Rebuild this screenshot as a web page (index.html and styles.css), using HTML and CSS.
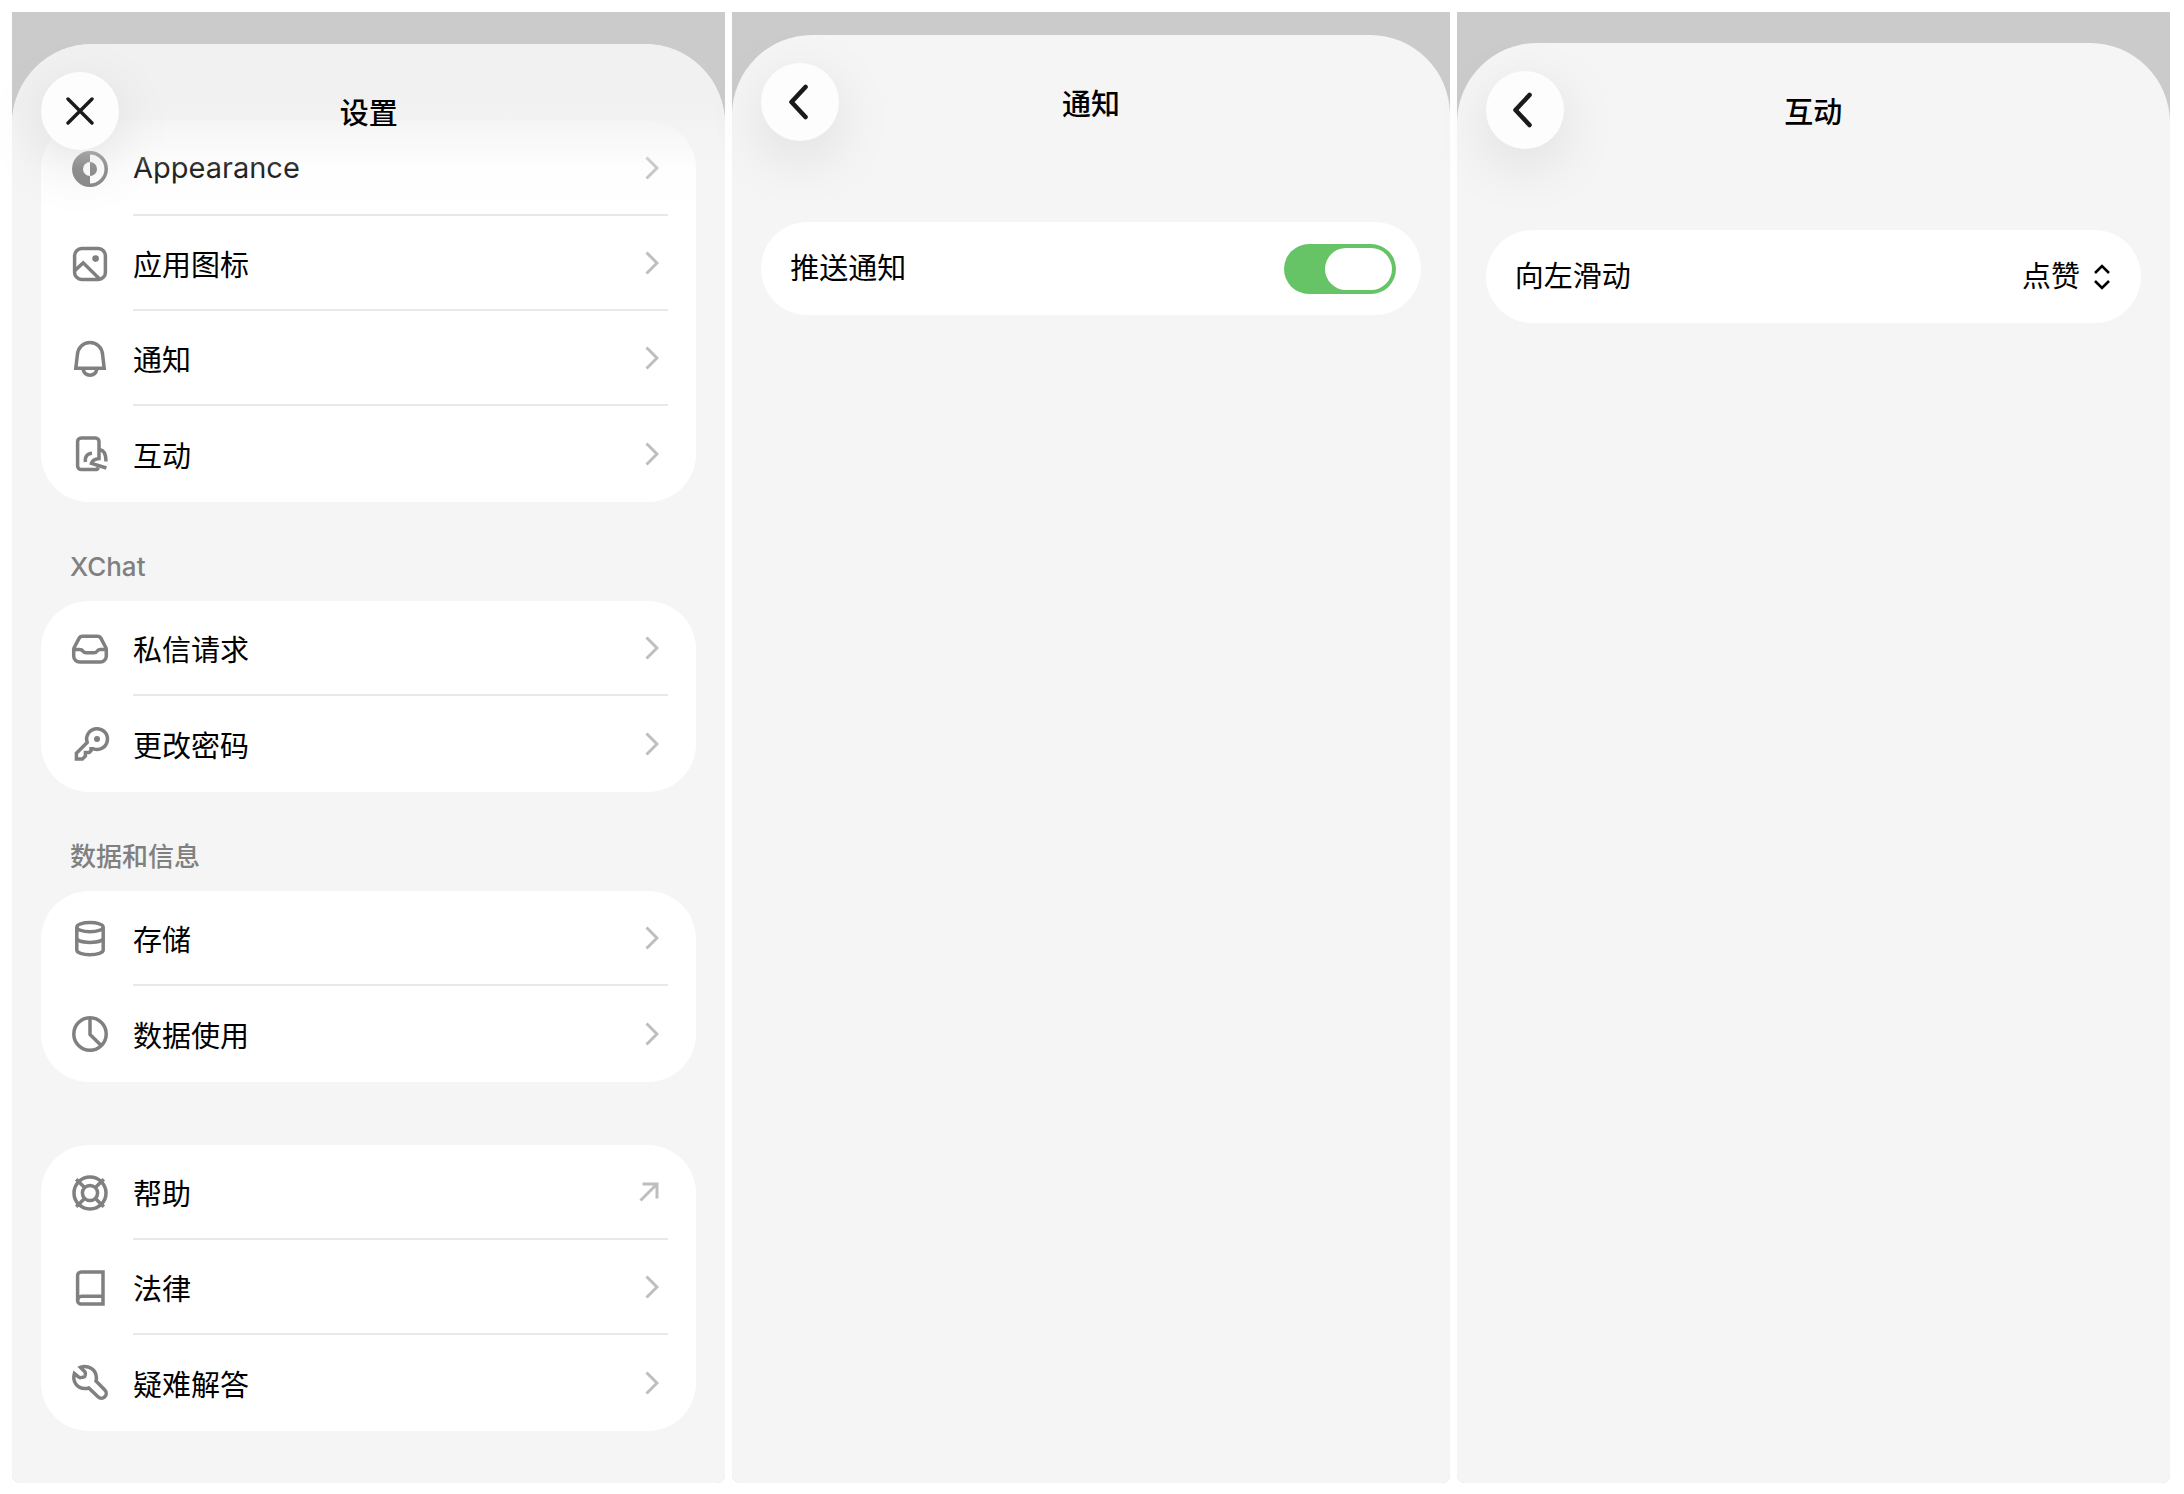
FILE: index.html
```html
<!DOCTYPE html>
<html lang="zh-CN">
<head>
  <meta charset="UTF-8" />
  <meta name="viewport" content="width=device-width, initial-scale=1.0"/>
  <title>设置</title>
  <link rel="stylesheet" href="styles.css">
</head>
<body>

<svg class="defs" aria-hidden="true">
  <symbol id="chevron" viewBox="0 0 14 24">
    <path d="M1.5 1.5 L12 12 L1.5 22.5"/>
  </symbol>
  <symbol id="back" viewBox="0 0 20 36">
    <path d="M17.5 3 L3.5 18 L17.5 33"/>
  </symbol>
</svg>

<main class="screens">

  <section class="screen">
    <div class="sheet sheet-settings">
      <header class="header">
        <button class="round-btn" aria-label="关闭">
          <svg class="close" viewBox="0 0 28 28"><path d="M2 2 L26 26 M26 2 L2 26"/></svg>
        </button>
        <h1>设置</h1>
      </header>

      <div class="content">
        <nav class="card">
          <a class="row" href="#">
            <svg class="icon" viewBox="0 0 40 40">
              <circle cx="20" cy="20" r="16.2"/>
              <path class="fill" d="M20 4 A16 16 0 0 0 20 36 V27 A7 7 0 0 1 20 13 Z"/>
              <path class="fill" d="M20 13 A7 7 0 0 1 20 27 Z"/>
            </svg>
            <span class="label">Appearance<svg class="chevron"><use href="#chevron"/></svg></span>
          </a>
          <a class="row" href="#">
            <svg class="icon" viewBox="0 0 40 40">
              <rect x="4.6" y="4.6" width="30.8" height="30.8" rx="7"/>
              <circle class="fill" cx="25.6" cy="14.6" r="3.3"/>
              <path d="M5 26.4 L13.2 18.8 L29.6 35"/>
            </svg>
            <span class="label">应用图标<svg class="chevron"><use href="#chevron"/></svg></span>
          </a>
          <a class="row" href="#">
            <svg class="icon" viewBox="0 0 40 40">
              <path d="M5.8 29.2 L7.4 15.6 C8 8.5 13 3.6 20 3.6 S32 8.5 32.6 15.6 L34.2 29.2 Z"/>
              <path d="M13 30 C14 34.2 17 36.2 20 36.2 S26 34.2 27 30"/>
            </svg>
            <span class="label">通知<svg class="chevron"><use href="#chevron"/></svg></span>
          </a>
          <a class="row" href="#">
            <svg class="icon" viewBox="0 0 40 40">
              <path d="M28.4 33.6 Q27.4 35.6 25.4 35.6 H11.2 A3.6 3.6 0 0 1 7.6 32 V7.6 A3.6 3.6 0 0 1 11.2 4 H25.4 A3.6 3.6 0 0 1 29 7.6 V24.6 C26 25 22.4 26 21.4 29.4 L36.4 34"/>
              <path d="M15.4 28 C14.6 22.8 17.4 19.4 22 19.2"/>
              <path d="M29.4 15.6 C34 16.2 36 20.6 36 27.4"/>
            </svg>
            <span class="label">互动<svg class="chevron"><use href="#chevron"/></svg></span>
          </a>
        </nav>

        <h2>XChat</h2>
        <nav class="card">
          <a class="row" href="#">
            <svg class="icon" viewBox="0 0 40 40">
              <path d="M12.6 7.2 H27.4 A4 4 0 0 1 31 9.4 L35.6 18.2 A5 5 0 0 1 36.3 21 V27 A6 6 0 0 1 30.3 33 H9.7 A6 6 0 0 1 3.7 27 V21 A5 5 0 0 1 4.4 18.2 L9 9.4 A4 4 0 0 1 12.6 7.2 Z"/>
              <path d="M4 20.4 H9.6 Q11.8 20.4 12.8 22 T16 23.8 H24 Q26.2 23.8 27.2 22 T30.4 20.4 H36"/>
            </svg>
            <span class="label">私信请求<svg class="chevron"><use href="#chevron"/></svg></span>
          </a>
          <a class="row" href="#">
            <svg class="icon" viewBox="0 0 40 40">
              <path d="M17.2 18.4 L6.4 29.2 V35.1 H12.4 L15.4 32 V28.6 H19.2 L21 26.8 V24.8 H23.4 A10.4 10.4 0 1 0 17.2 18.4 Z"/>
              <circle class="fill" cx="27" cy="15" r="3"/>
            </svg>
            <span class="label">更改密码<svg class="chevron"><use href="#chevron"/></svg></span>
          </a>
        </nav>

        <h2>数据和信息</h2>
        <nav class="card">
          <a class="row" href="#">
            <svg class="icon" viewBox="0 0 40 40">
              <ellipse cx="20" cy="8.2" rx="13.2" ry="4.6"/>
              <path d="M6.8 8.2 V31 C6.8 33.8 12.6 35.8 20 35.8 S33.2 33.8 33.2 31 V8.2"/>
              <path d="M6.8 19 C6.8 21.8 12.6 23.4 20 23.4 S33.2 21.8 33.2 19"/>
            </svg>
            <span class="label">存储<svg class="chevron"><use href="#chevron"/></svg></span>
          </a>
          <a class="row" href="#">
            <svg class="icon" viewBox="0 0 40 40">
              <circle cx="20" cy="20" r="16.2"/>
              <path d="M20 4 V20.6 L31.4 31.8"/>
            </svg>
            <span class="label">数据使用<svg class="chevron"><use href="#chevron"/></svg></span>
          </a>
        </nav>

        <nav class="card card-last">
          <a class="row" href="#">
            <svg class="icon" viewBox="0 0 40 40">
              <circle cx="20" cy="20" r="16"/>
              <circle cx="20" cy="20" r="7.6"/>
              <path d="M6.2 6.2 L14.6 14.6 M33.8 6.2 L25.4 14.6 M6.2 33.8 L14.6 25.4 M33.8 33.8 L25.4 25.4"/>
            </svg>
            <span class="label">帮助<svg class="arrow" viewBox="0 0 20 20"><path d="M1.5 18.5 L17.5 2.5 M3.5 2 H18 V16.5"/></svg></span>
          </a>
          <a class="row" href="#">
            <svg class="icon" viewBox="0 0 40 40">
              <path d="M33 3.9 H11.2 A3.6 3.6 0 0 0 7.6 7.5 V32.5 A3.6 3.6 0 0 0 11.2 36.1 H33 Z"/>
              <path d="M33 28.2 H11.6 A4 4 0 0 0 7.6 32.2"/>
            </svg>
            <span class="label">法律<svg class="chevron"><use href="#chevron"/></svg></span>
          </a>
          <a class="row" href="#">
            <svg class="icon" viewBox="0 0 40 40">
              <path d="M10.4 4.3 C17.6 1.5 26.4 6.2 26.4 14.8 C26.4 16 26.3 17 26 18 L34.8 27 A4.7 4.7 0 0 1 28 33.8 L18.8 25 C17.6 25.4 16.4 25.6 15 25.6 C7 25.6 2 18.4 4.4 10.6 L8.8 14.2 Q9.6 14.8 10.6 14.6 L13.6 14 Q15 13.6 15.2 12.2 L15.4 10.4 Q15.4 9.4 14.8 8.8 Z"/>
            </svg>
            <span class="label">疑难解答<svg class="chevron"><use href="#chevron"/></svg></span>
          </a>
        </nav>
      </div>
    </div>
  </section>

  <section class="screen">
    <div class="sheet sheet-notify">
      <header class="header">
        <button class="round-btn" aria-label="返回"><svg class="back"><use href="#back"/></svg></button>
        <h1>通知</h1>
      </header>
      <div class="content">
        <div class="card option">
          <label for="push">推送通知</label>
          <input type="checkbox" id="push" class="switch" checked>
        </div>
      </div>
    </div>
  </section>

  <section class="screen">
    <div class="sheet sheet-swipe">
      <header class="header">
        <button class="round-btn" aria-label="返回"><svg class="back"><use href="#back"/></svg></button>
        <h1>互动</h1>
      </header>
      <div class="content">
        <div class="card option">
          <label for="swipe">向左滑动</label>
          <div class="picker">
            <select id="swipe">
              <option>点赞</option>
            </select>
            <svg class="updown" viewBox="0 0 18 26"><path d="M2 9 L9 2 L16 9 M2 17 L9 24 L16 17"/></svg>
          </div>
        </div>
      </div>
    </div>
  </section>

</main>

</body>
</html>
```
FILE: styles.css
```css
* {
  box-sizing: border-box;
}
body {
  margin: 0;
  background: #fff;
  color: #000;
  font-family: Inter, "Noto Sans CJK SC", sans-serif;
  font-size: 29px;
}
.defs {
  display: none;
}
svg {
  fill: none;
  stroke: currentColor;
}
.screens {
  display: grid;
  grid-template-columns: 713fr 717fr 713fr;
  gap: 7px;
  min-height: 100vh;
  padding: 12px 14px 11px 12px;
}
.screen {
  display: flex;
  flex-direction: column;
  background: #cbcbcb;
  border-radius: 0 0 8px 8px;
}
.sheet {
  flex: 1;
  background: #f5f5f5;
  border-radius: 80px 80px 8px 8px;
}
.sheet-settings {
  margin-top: 32px;
}
.sheet-notify {
  margin-top: 23px;
}
.sheet-swipe {
  margin-top: 31px;
}

/* header */
.header {
  position: relative;
  z-index: 1;
  display: grid;
  grid-template-columns: 78px 1fr 78px;
  align-items: center;
  padding: 28px 29px;
}
h1 {
  margin: 0;
  font-size: 29px;
  font-weight: 500;
  text-align: center;
}
.round-btn {
  display: flex;
  align-items: center;
  justify-content: center;
  width: 78px;
  height: 78px;
  padding: 0;
  border: none;
  border-radius: 50%;
  background: #fdfdfd;
  color: #1a1a1a;
  box-shadow: 0 16px 60px rgba(0, 0, 0, 0.1);
  cursor: pointer;
}
.close {
  width: 28px;
  height: 28px;
  stroke-width: 3.4;
  stroke-linecap: round;
}
.back {
  width: 20px;
  height: 36px;
  margin-right: 5px;
  stroke-width: 4.6;
  stroke-linecap: round;
  stroke-linejoin: round;
}

.sheet-settings .header::before {
  content: "";
  position: absolute;
  z-index: -1;
  top: 0;
  left: 0;
  right: 0;
  height: 172px;
  border-radius: 80px 80px 0 0;
  background: linear-gradient(#f1f1f1 0, #f1f1f1 60px, rgba(243, 243, 243, 0.7) 86px, rgba(246, 246, 246, 0.16) 124px, rgba(255, 255, 255, 0) 172px);
  pointer-events: none;
}
.content {
  padding: 53px 29px;
}
.sheet-settings .content {
  margin-top: -57px;
  padding: 0 29px 51px;
}

/* cards */
.card {
  background: #fff;
  border-radius: 48px;
}
.card-last {
  margin-top: 63px;
}
h2 {
  margin: 47px 29px 16px;
  color: #808080;
  font-size: 26px;
  font-weight: 500;
  line-height: 36px;
}
.row {
  display: flex;
  align-items: center;
  gap: 23px;
  padding: 0 28px 0 29px;
  color: #000;
  text-decoration: none;
}
.icon {
  flex: none;
  width: 40px;
  height: 40px;
  color: #808080;
  stroke-width: 3.5;
}
.fill {
  fill: currentColor;
  stroke: none;
}
.label {
  flex: 1;
  display: flex;
  align-items: center;
  justify-content: space-between;
  height: 95px;
  padding-right: 9px;
  border-bottom: 2px solid #e8e8e8;
}
.row:last-child .label {
  height: 96px;
  border-bottom: none;
}
.chevron {
  width: 14px;
  height: 24px;
  color: #bebebe;
  stroke-width: 3;
}
.arrow {
  width: 20px;
  height: 20px;
  color: #bebebe;
  stroke-width: 3;
}

/* single option cards */
.option {
  display: flex;
  align-items: center;
  justify-content: space-between;
  min-height: 93px;
  padding: 0 25px 0 29px;
  line-height: 42px;
}
.switch {
  appearance: none;
  display: flex;
  width: 112px;
  height: 50px;
  margin: 0;
  padding: 4px;
  border-radius: 25px;
  background: #c8c8c8;
  cursor: pointer;
}
.switch::before {
  content: "";
  width: 67px;
  height: 42px;
  border-radius: 21px;
  background: #fff;
}
.switch:checked {
  justify-content: flex-end;
  background: #66c466;
}
.picker {
  display: flex;
  align-items: center;
  gap: 12px;
  padding-right: 5px;
}
.picker select {
  appearance: none;
  height: 42px;
  padding: 0;
  border: none;
  background: none;
  color: #000;
  font: inherit;
}
.updown {
  width: 18px;
  height: 26px;
  stroke-width: 2.6;
}
```
